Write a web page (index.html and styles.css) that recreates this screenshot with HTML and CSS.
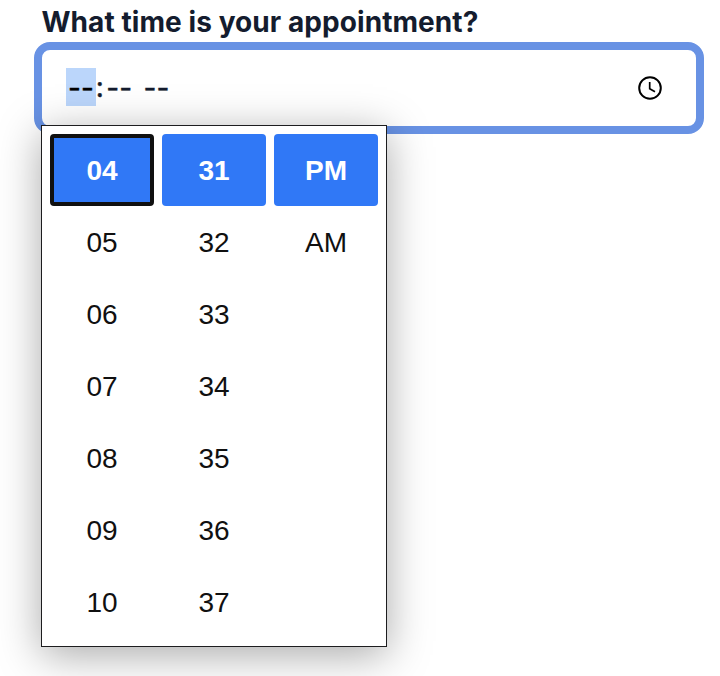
FILE: index.html
```html
<!DOCTYPE html>
<html lang="en">
<head>
<meta charset="utf-8">
<title>Appointment time</title>
<link rel="stylesheet" href="styles.css">
</head>
<body>
<main class="form">
  <div class="label">What time is your appointment?</div>
  <div class="field">
    <div class="time"><span class="segment selected">--</span><span class="colon">:</span><span class="segment">--</span><span class="segment period">--</span></div>
    <svg class="clock" width="24" height="24" viewBox="0 0 24 24" fill="none" stroke="#000">
      <circle cx="12" cy="12" r="10.8" stroke-width="2"/>
      <path d="M11.7 6v6.7l5.3 3.1" stroke-width="1.7"/>
    </svg>
    <div class="picker">
      <div class="column">
        <div class="cell active focused">04</div>
        <div class="cell">05</div>
        <div class="cell">06</div>
        <div class="cell">07</div>
        <div class="cell">08</div>
        <div class="cell">09</div>
        <div class="cell">10</div>
      </div>
      <div class="column">
        <div class="cell active">31</div>
        <div class="cell">32</div>
        <div class="cell">33</div>
        <div class="cell">34</div>
        <div class="cell">35</div>
        <div class="cell">36</div>
        <div class="cell">37</div>
      </div>
      <div class="column">
        <div class="cell active">PM</div>
        <div class="cell">AM</div>
      </div>
    </div>
  </div>
</main>
</body>
</html>
```
FILE: styles.css
```css
* { box-sizing: border-box; }
body {
  margin: 0;
  height: 676px;
  overflow: hidden;
  background: #fff;
  color: #141c2e;
  font-family: Inter, sans-serif;
  font-size: 28px;
}
.form { padding: 2px 16px 0 34px; }
.label {
  height: 40px;
  padding-left: 7.5px;
  line-height: 40px;
  font-weight: 700;
  letter-spacing: 0.07px;
  white-space: nowrap;
}
.field {
  position: relative;
  display: flex;
  align-items: center;
  justify-content: space-between;
  height: 92px;
  padding: 0 34px 0 24px;
  border: 8px solid #6892e4;
  border-radius: 16px;
}
.time {
  display: flex;
  align-items: center;
  height: 38px;
  margin-bottom: 2px;
  line-height: 40px;
  -webkit-text-stroke: 0.4px currentColor;
}
.segment {
  height: 38px;
  padding: 0 2px;
}
.selected {
  background: #bbd6fb;
  color: #000;
}
.colon { margin-right: 0.5px; }
.period { margin-left: 7.5px; }
.picker {
  position: absolute;
  top: 75px;
  left: -1px;
  display: flex;
  gap: 8px;
  width: 346px;
  height: 522px;
  padding: 8px;
  border: 1px solid #1d1d1f;
  background: #fff;
  color: #101010;
  font-family: "Liberation Sans", Arial, sans-serif;
  box-shadow: 0 8px 40px rgba(0, 0, 0, 0.34);
}
.column { width: 104px; }
.cell {
  display: flex;
  align-items: center;
  justify-content: center;
  height: 72px;
  padding-top: 2px;
}
.active {
  border-radius: 4px;
  background: #3078f6;
  color: #fff;
  font-weight: 700;
}
.focused { border: 4px solid #101010; }
```
